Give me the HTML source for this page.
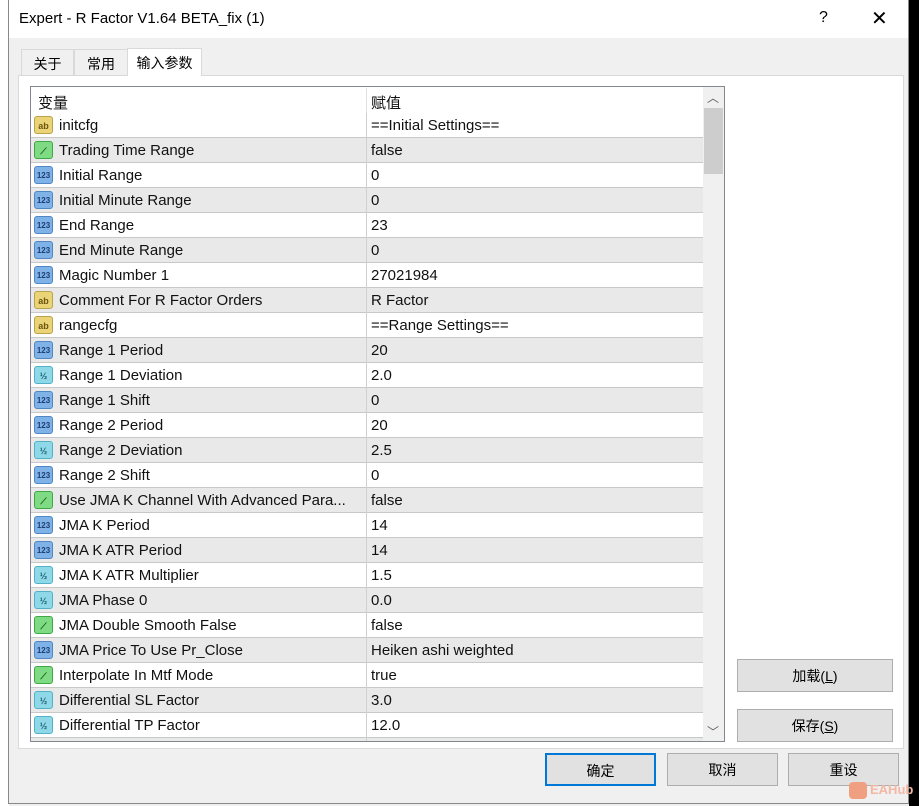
<!DOCTYPE html>
<html><head><meta charset="utf-8"><style>
*{margin:0;padding:0;box-sizing:border-box}
body{width:919px;height:806px;overflow:hidden;background:#f0f0f0;font-family:"Liberation Sans","Noto Sans CJK SC",sans-serif;position:relative}
.abs{position:absolute}
#leftbg{left:0;top:0;width:9px;height:806px;background:#fff}
#rightbg{left:909px;top:0;width:10px;height:806px;background:#000}
#dlg{left:8px;top:0;width:901px;height:804px;background:#f0f0f0;border:1px solid #888;border-top:none}
#title{left:0;top:0;width:899px;height:38px;background:#fff;font-size:15px;color:#000}
.tab{top:49px;height:26px;font-size:14px;padding:3px 0 0 0;text-align:center;background:#f0f0f0;border:1px solid #d9d9d9;border-bottom:none}
#panel{left:18px;top:75px;width:886px;height:674px;background:#fff;border:1px solid #d9d9d9}
#list{left:30px;top:86px;width:695px;height:656px;border:1px solid #828790;background:#fff;overflow:hidden}
.row{position:absolute;left:0;width:673px;height:25px;border-bottom:1px solid #c8c8c8;font-size:15px;color:#111}
.row.g{background:#e9e9e9}
.row .n{position:absolute;left:28px;top:4px;white-space:nowrap}
.row .v{position:absolute;left:340px;top:4px;white-space:nowrap}
.row .d{position:absolute;left:335px;top:0;width:1px;height:25px;background:#d0d0d0}
.ic{position:absolute;left:3px;top:3px;width:19px;height:18px;border-radius:3px;font-size:9px;font-weight:bold;text-align:center;line-height:18px}
.ab{background:#ead477;border:1px solid #bba34a;color:#6b5510}
.in{background:#7fb2e6;border:1px solid #4f86c4;color:#1d3f75;font-size:8px}
.fl{background:#8fd8e8;border:1px solid #4fb2c8;color:#1d5f75;font-size:9px}
.bo{background:#7fdb83;border:1px solid #3ea847;color:#145a18}
.btn{position:absolute;background:#e1e1e1;border:1px solid #adadad;font-size:14px;text-align:center;color:#000}
</style></head><body>
<div id="leftbg" class="abs"></div><div id="rightbg" class="abs"></div>
<div id="dlg" class="abs">
<div id="title" class="abs"><span class="abs" style="left:10px;top:10px">Expert - R Factor V1.64 BETA_fix (1)</span><span class="abs" style="left:810px;top:9px;font-size:16px">?</span><span class="abs" style="left:862px;top:6px;font-size:20px;font-weight:300">✕</span></div>
<div class="tab abs" style="left:12px;width:53px;padding-top:4px">关于</div>
<div class="tab abs" style="left:65px;width:54px;padding-top:4px">常用</div>
<div class="tab abs" style="left:118px;width:75px;top:48px;height:28px;background:#fff;z-index:2;padding-top:4px">输入参数</div>
</div>
<div id="panel" class="abs"></div>
<div id="list" class="abs">
<div class="row" style="top:1px;height:25px;border-bottom:none"><span class="n" style="left:7px">变量</span><span class="d" style="left:335px;background:#e0e0e0"></span><span class="v">赋值</span></div>
<div id="rows"></div>
<div class="abs" style="left:672px;top:0;width:21px;height:656px;background:#f0f0f0"></div>
<div class="abs" style="left:673px;top:21px;width:19px;height:66px;background:#cdcdcd"></div>
<div class="abs" style="left:676px;top:2px;font-size:12px;color:#606060">︿</div>
<div class="abs" style="left:676px;top:636px;font-size:12px;color:#606060">﹀</div>
</div>
<div class="btn" style="left:737px;top:659px;width:156px;height:33px;padding-top:6px">加载(<u>L</u>)</div>
<div class="btn" style="left:737px;top:709px;width:156px;height:33px;padding-top:6px">保存(<u>S</u>)</div>
<div class="btn" style="left:545px;top:753px;width:111px;height:33px;padding-top:6px;border:2px solid #0078d7">确定</div>
<div class="btn" style="left:667px;top:753px;width:111px;height:33px;padding-top:6px">取消</div>
<div class="btn" style="left:788px;top:753px;width:111px;height:33px;padding-top:6px">重设</div>
<div class="abs" style="left:849px;top:782px;width:18px;height:17px;background:#f0a080;border-radius:4px"></div>
<div class="abs" style="left:870px;top:782px;font-size:13px;font-weight:bold;color:#f3b7a3">EAHub</div>
<script>
var d=[["ab","initcfg","==Initial Settings=="],["bo","Trading Time Range","false"],["in","Initial Range","0"],["in","Initial Minute Range","0"],["in","End Range","23"],["in","End Minute Range","0"],["in","Magic Number 1","27021984"],["ab","Comment For R Factor Orders","R Factor"],["ab","rangecfg","==Range Settings=="],["in","Range 1 Period","20"],["fl","Range 1 Deviation","2.0"],["in","Range 1 Shift","0"],["in","Range 2 Period","20"],["fl","Range 2 Deviation","2.5"],["in","Range 2 Shift","0"],["bo","Use JMA K Channel With Advanced Para...","false"],["in","JMA K Period","14"],["in","JMA K ATR Period","14"],["fl","JMA K ATR Multiplier","1.5"],["fl","JMA Phase 0","0.0"],["bo","JMA Double Smooth False","false"],["in","JMA Price To Use Pr_Close","Heiken ashi weighted"],["bo","Interpolate In Mtf Mode","true"],["fl","Differential SL Factor","3.0"],["fl","Differential TP Factor","12.0"],["fl","",""]];
var lab={ab:"ab",in:"123",fl:"½",bo:"⟋"};var h="";
d.forEach(function(r,i){h+='<div class="row'+(i%2?' g':'')+'" style="top:'+(26+i*25)+'px"><span class="ic '+r[0]+'">'+lab[r[0]]+'</span><span class="n">'+r[1]+'</span><span class="d"></span><span class="v">'+r[2]+'</span></div>';});
document.getElementById("rows").innerHTML=h;
</script>
</body></html>
